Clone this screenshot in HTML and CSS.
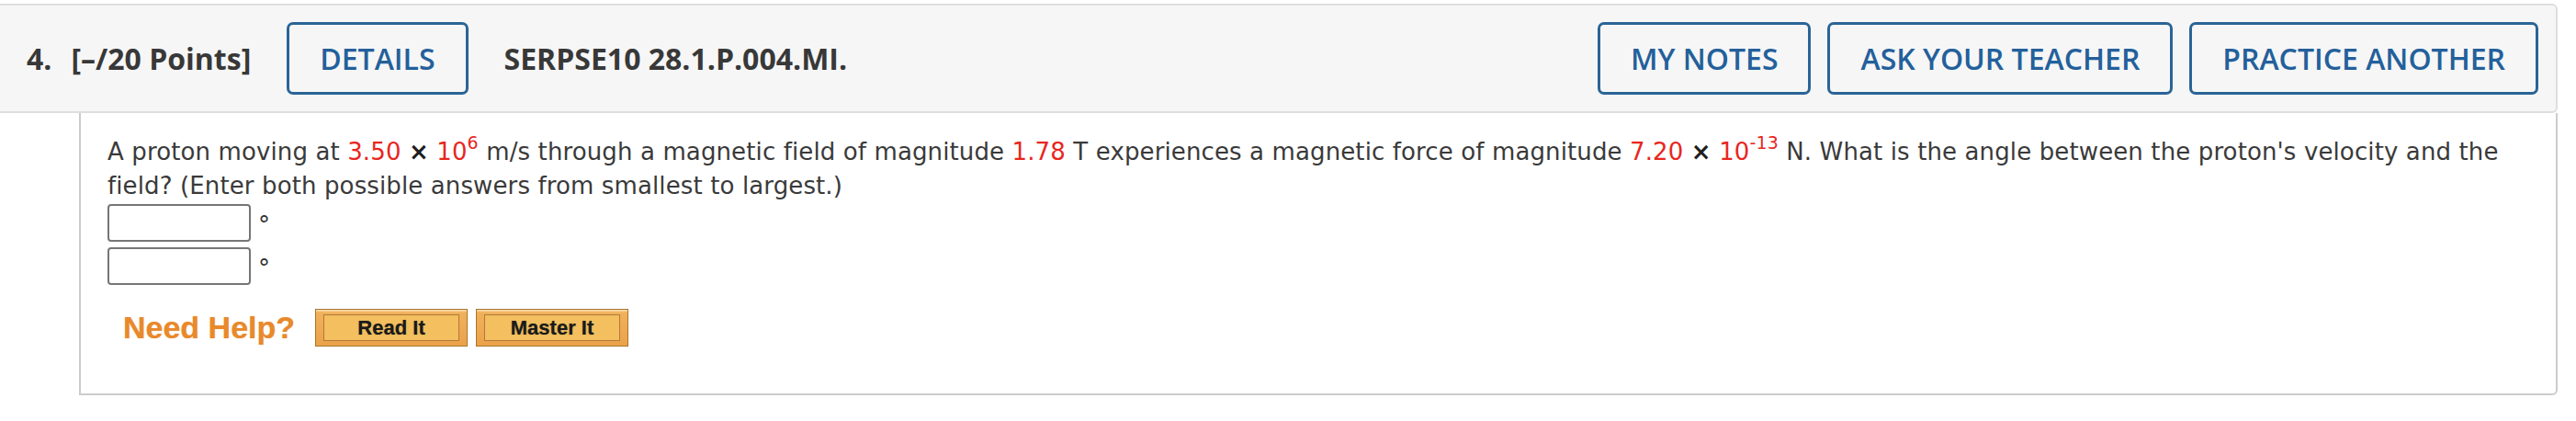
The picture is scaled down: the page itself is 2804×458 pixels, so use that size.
FILE: index.html
```html
<!DOCTYPE html>
<html lang="en">
<head>
<meta charset="utf-8">
<title>Question 4</title>
<link rel="stylesheet" href="styles.css">
</head>
<body>
<div class="question">
  <div class="qhead">
    <span class="qnum">4.</span>
    <span class="qpts">[–/20 Points]</span>
    <button class="hbtn">DETAILS</button>
    <span class="qid">SERPSE10 28.1.P.004.MI.</span>
    <div class="hright">
      <button class="hbtn">MY NOTES</button>
      <button class="hbtn">ASK YOUR TEACHER</button>
      <button class="hbtn">PRACTICE ANOTHER</button>
    </div>
  </div>
  <div class="qbody">
    <p class="prompt">A proton moving at <span class="red">3.50</span> <b class="times">×</b> <span class="red">10<sup>6</sup></span> m/s through a magnetic field of magnitude <span class="red">1.78</span> T experiences a magnetic force of magnitude <span class="red">7.20</span> <b class="times">×</b> <span class="red">10<sup>-13</sup></span> N. What is the angle between the proton's velocity and the field? (Enter both possible answers from smallest to largest.)</p>
    <div class="answers">
      <div class="ans"><input type="text" class="box"><span class="deg">°</span></div>
      <div class="ans"><input type="text" class="box"><span class="deg">°</span></div>
    </div>
    <div class="help">
      <span class="needhelp">Need Help?</span>
      <span class="obtn"><span class="obtn-in">Read It</span></span>
      <span class="obtn"><span class="obtn-in">Master It</span></span>
    </div>
  </div>
</div>
</body>
</html>
```

FILE: styles.css
```css
html, body {
  margin: 0;
  padding: 0;
  background: #ffffff;
}

body {
  padding-top: 4px;
}

.question {
  margin-right: 20px;
}

.qhead {
  display: flex;
  align-items: center;
  height: 119px;
  box-sizing: border-box;
  padding: 0 19px 0 29px;
  background: #f6f6f6;
  border: 2px solid #dedede;
  border-left: none;
  border-radius: 0 6px 6px 0;
  font-family: "Open Sans", "Liberation Sans", sans-serif;
  color: #383838;
}

.qnum,
.qpts,
.qid {
  font-size: 32px;
  font-weight: 700;
  white-space: nowrap;
}

.qnum {
  margin-right: 21px;
}

.qpts {
  margin-right: 39px;
}

.qid {
  margin-left: 39px;
}

.hbtn {
  height: 79px;
  box-sizing: border-box;
  padding: 0 33px;
  background: transparent;
  border: 3px solid #2a6496;
  border-radius: 7px;
  font-family: "Open Sans", "Liberation Sans", sans-serif;
  font-size: 32px;
  font-weight: 600;
  color: #23609b;
  white-space: nowrap;
}

.hright {
  margin-left: auto;
  display: flex;
  gap: 18px;
}

.qbody {
  margin-left: 86px;
  padding: 24px 29px 51px 29px;
  border: 2px solid #cccccc;
  border-top: none;
  border-radius: 0 0 6px 0;
  font-family: "DejaVu Sans", Verdana, sans-serif;
  font-size: 26px;
  color: #3a3a3a;
}

.prompt {
  margin: 0;
  line-height: 37px;
  letter-spacing: 0.12px;
}

.prompt sup {
  font-size: 19px;
  line-height: 16px;
  vertical-align: 12px;
}

.red {
  color: #e8261e;
}

.times {
  color: #1e1e1e;
}

.answers {
  margin-top: 1px;
  display: flex;
  flex-direction: column;
  gap: 3px;
}

.ans {
  display: flex;
  align-items: flex-start;
}

.box {
  width: 156px;
  height: 41px;
  box-sizing: border-box;
  margin: 0;
  border: 2px solid #767676;
  border-radius: 4px;
  background: #ffffff;
}

.deg {
  margin-left: 8px;
  line-height: 41px;
  padding-top: 3px;
  font-size: 26px;
  color: #333333;
}

.help {
  margin-top: 23px;
  padding-left: 17px;
  display: flex;
  align-items: center;
}

.needhelp {
  font-family: "Liberation Sans", Arial, sans-serif;
  font-weight: 700;
  font-size: 34px;
  color: #e8892c;
  text-shadow: 0 0 1px rgba(232, 137, 44, 0.6);
  margin-right: 22px;
  white-space: nowrap;
}

.obtn {
  width: 166px;
  height: 41px;
  box-sizing: border-box;
  padding: 5px 8px 5px 8px;
  margin-right: 9px;
  border: 1px solid #a9742f;
  background: linear-gradient(to bottom, #fbe3bb 0, #f0b15a 3px, #eba249 100%);
  display: flex;
}

.obtn-in {
  flex: 1;
  display: flex;
  align-items: center;
  justify-content: center;
  border: 1px solid #b17a3b;
  background: #f3bf5f;
  font-family: "Liberation Sans", Arial, sans-serif;
  font-weight: 700;
  font-size: 22px;
  color: #1a1a1a;
  text-shadow: 0 0 1px rgba(0, 0, 0, 0.45);
}
```
